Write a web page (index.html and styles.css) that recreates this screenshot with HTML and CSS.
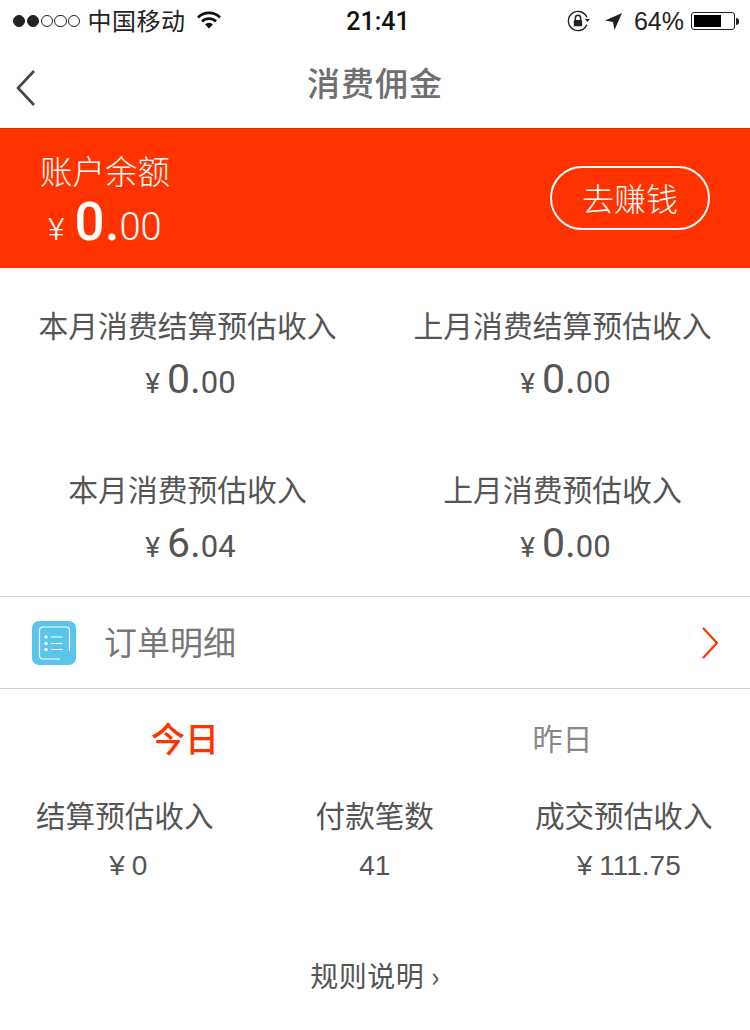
FILE: index.html
```html
<!DOCTYPE html>
<html lang="zh-CN">
<head>
  <meta charset="UTF-8">
  <title>消费佣金</title>
  <link rel="stylesheet" href="styles.css">
</head>
<body>

  <div class="status-bar">
    <div class="status-left">
      <span class="signal"><i class="on"></i><i class="on"></i><i></i><i></i><i></i></span>
      <span class="carrier">中国移动</span>
      <svg class="wifi" width="24" height="18" viewBox="0 0 24 18">
        <path d="M1 6.500a15.500 15.500 0 0 1 22 0" fill="none" stroke="#111" stroke-width="2.600"/>
        <path d="M5 10.500a10 10 0 0 1 14 0" fill="none" stroke="#111" stroke-width="2.600"/>
        <path d="M8 13.200a6 6 0 0 1 8 0L12 17.500z" fill="#111"/>
      </svg>
    </div>
    <div class="status-time">21:41</div>
    <div class="status-right">
      <svg width="25" height="24" viewBox="0 0 24 22">
        <path d="M20 7.500A9.200 9.200 0 1 0 20 14.500" fill="none" stroke="#222" stroke-width="1.300"/>
        <path d="M18 9h5l-2.500 3z" fill="#222"/>
        <path d="M9 10V8a2.500 2.500 0 0 1 5 0v2" fill="none" stroke="#222" stroke-width="1.500"/>
        <rect x="7.500" y="10" width="8" height="6" rx="1" fill="#222"/>
      </svg>
      <svg class="arrow" width="19" height="19" viewBox="0 0 19 19">
        <path d="M18 1L1 8.500l8 1.500 1.500 8z" fill="#222"/>
      </svg>
      <span class="percent">64%</span>
      <span class="battery"><span class="battery-fill"></span></span>
      <span class="battery-tip"></span>
    </div>
  </div>

  <div class="nav-bar">
    <svg class="back" width="22" height="38" viewBox="0 0 22 38">
      <path d="M19 2L3 19l16 17" fill="none" stroke="#444" stroke-width="2.600"/>
    </svg>
    <h1>消费佣金</h1>
  </div>

  <div class="balance">
    <div>
      <div class="balance-label">账户余额</div>
      <div class="balance-value"><span class="yen">¥</span><b>0.</b><span class="cents">00</span></div>
    </div>
    <div class="earn-btn">去赚钱</div>
  </div>

  <div class="income-grid">
    <div class="income">
      <div class="income-label">本月消费结算预估收入</div>
      <div class="money"><span class="yen-sm">¥</span><span class="big">0.</span>00</div>
    </div>
    <div class="income">
      <div class="income-label">上月消费结算预估收入</div>
      <div class="money"><span class="yen-sm">¥</span><span class="big">0.</span>00</div>
    </div>
    <div class="income">
      <div class="income-label">本月消费预估收入</div>
      <div class="money"><span class="yen-sm">¥</span><span class="big">6.</span>04</div>
    </div>
    <div class="income">
      <div class="income-label">上月消费预估收入</div>
      <div class="money"><span class="yen-sm">¥</span><span class="big">0.</span>00</div>
    </div>
  </div>

  <div class="order-row">
    <span class="order-icon">
      <svg width="44" height="44" viewBox="0 0 44 44">
        <path d="M37.500 30V9.500a3.500 3.500 0 0 0-3.500-3.500H11a3.500 3.500 0 0 0-3.500 3.500V34.500a3.500 3.500 0 0 0 3.500 3.500h17" fill="none" stroke="#fff" stroke-width="1.200"/>
        <circle cx="14" cy="16" r="1.700" fill="#fff"/>
        <circle cx="14" cy="22.500" r="1.700" fill="#fff"/>
        <circle cx="14" cy="28.500" r="1.700" fill="#fff"/>
        <path d="M19 16h11.500M19 22.500h11.500M19 28.500h11.500" stroke="#fff" stroke-width="1.200"/>
      </svg>
    </span>
    <span class="order-text">订单明细</span>
    <svg class="order-arrow" width="18" height="32" viewBox="0 0 18 32">
      <path d="M2 1l14 15L2 31" fill="none" stroke="#ff3300" stroke-width="2.200"/>
    </svg>
  </div>

  <div class="tabs">
    <div class="tab active">今日</div>
    <div class="tab">昨日</div>
  </div>

  <div class="stats">
    <div class="stat stat-a">
      <div class="stat-label">结算预估收入</div>
      <div class="stat-value"><span class="yen-sm">¥</span>0</div>
    </div>
    <div class="stat stat-b">
      <div class="stat-label">付款笔数</div>
      <div class="stat-value">41</div>
    </div>
    <div class="stat stat-c">
      <div class="stat-label">成交预估收入</div>
      <div class="stat-value"><span class="yen-sm">¥</span>111.75</div>
    </div>
  </div>

  <div class="rules">规则说明 ›</div>

</body>
</html>
```
FILE: styles.css
```css
body {
  margin: 0;
  width: 750px;
  background: #fff;
  font-family: "Noto Sans CJK SC", "Liberation Sans", sans-serif;
  color: #555;
}
.status-bar {
  height: 42px;
  display: grid;
  grid-template-columns: 1fr auto 1fr;
  align-items: center;
  color: #222;
  font-size: 24px;
}
.status-left {
  display: flex;
  align-items: center;
  padding-left: 13px;
}
.signal {
  display: flex;
  gap: 1.500px;
  margin-right: 7px;
}
.signal i {
  width: 12.300px;
  height: 12.300px;
  box-sizing: border-box;
  border: 1px solid #222;
  border-radius: 50%;
}
.signal i.on {
  background: #222;
}
.carrier {
  line-height: 40px;
  letter-spacing: 0.5px;
  margin-top: -2px;
}
.wifi {
  margin-left: 12px;
  margin-top: -3px;
}
.status-time {
  font-family: Roboto, "Liberation Sans", sans-serif;
  font-weight: 500;
  font-size: 25px;
  color: #111;
  padding-left: 6px;
}
.status-right {
  display: flex;
  align-items: center;
  justify-content: flex-end;
  padding-right: 11px;
  font-family: "Liberation Sans", sans-serif;
  font-size: 25px;
}
.arrow {
  margin-left: 13px;
}
.percent {
  margin-left: 11px;
}
.battery {
  margin-left: 7px;
  width: 44px;
  height: 18px;
  box-sizing: border-box;
  border: 1px solid #222;
  border-radius: 3px;
  padding: 2px;
  display: flex;
}
.battery-fill {
  width: 27px;
  background: #000;
}
.battery-tip {
  width: 3px;
  height: 7px;
  margin-left: 1px;
  background: #222;
  border-radius: 0 3px 3px 0;
}
.nav-bar {
  height: 86px;
  box-sizing: border-box;
  display: flex;
  align-items: center;
  justify-content: center;
  position: relative;
  padding-bottom: 6px;
}
.back {
  position: absolute;
  left: 15px;
  top: 27px;
}
h1 {
  margin: 0;
  font-size: 33px;
  font-weight: 500;
  letter-spacing: 1px;
  color: #707070;
}
.balance {
  height: 140px;
  box-sizing: border-box;
  background: #ff3300;
  border-top: 1px solid #c8300f;
  padding: 0 40px;
  display: flex;
  align-items: center;
  justify-content: space-between;
  color: #fff;
}
.balance-label {
  font-size: 32.500px;
  line-height: 44px;
  font-weight: 300;
  margin-top: 8px;
}
.balance-value {
  font-family: Roboto, "Liberation Sans", sans-serif;
  font-size: 38px;
  line-height: 56px;
  padding-left: 8px;
  margin-top: 2px;
  font-weight: 300;
}
.balance-value b {
  font-size: 53px;
  font-weight: 500;
}
.yen {
  font-size: 32px;
  margin-right: 10px;
}
.earn-btn {
  width: 160px;
  height: 64px;
  box-sizing: border-box;
  border: 2px solid #fff;
  border-radius: 32px;
  font-size: 32px;
  line-height: 58px;
  text-align: center;
  font-weight: 300;
  margin-top: -2px;
}
.income-grid {
  display: grid;
  grid-template-columns: 375px 375px;
  grid-auto-rows: 164px;
  height: 329px;
  box-sizing: border-box;
  padding-top: 35px;
  border-bottom: 1px solid #d0d0d0;
}
.income {
  text-align: center;
  font-size: 29.800px;
  line-height: 42px;
}
.income-label {
  color: #555;
}
.money {
  font-family: Roboto, "Liberation Sans", sans-serif;
  font-size: 31px;
  line-height: 52px;
  margin-top: 8px;
  padding-left: 6px;
  color: #555;
}
.big {
  font-size: 41px;
}
.yen-sm {
  font-size: 28px;
  margin-right: 7px;
}
.order-row {
  height: 92px;
  box-sizing: border-box;
  border-bottom: 1px solid #d0d0d0;
  display: flex;
  align-items: center;
  padding: 0 31px 0 32px;
}
.order-icon {
  width: 44px;
  height: 44px;
  background: #5bc4ec;
  border-radius: 7px;
  display: flex;
}
.order-text {
  margin-left: 28px;
  font-size: 33px;
  line-height: 40px;
  color: #777;
  flex: 1;
  margin-top: -3px;
}
.tabs {
  display: grid;
  grid-template-columns: 375px 375px;
  height: 100px;
  align-items: center;
  text-align: center;
  padding-bottom: 4px;
  box-sizing: border-box;
}
.tab {
  font-size: 30px;
  color: #888;
}
.tab.active {
  font-size: 34px;
  padding-right: 5px;
  color: #ff3300;
  font-weight: 500;
}
.stats {
  display: flex;
  height: 130px;
  padding: 4px 0 0 36px;
  color: #555;
}
.stat {
  font-size: 29.600px;
  text-align: center;
  line-height: 44px;
}
.stat-b {
  margin-left: 102px;
}
.stat-c {
  margin-left: 101px;
}
.stat-value {
  font-family: "Liberation Sans", sans-serif;
  font-size: 28px;
  line-height: 50px;
  margin-top: 4px;
  color: #555;
}
.stat-a .stat-value {
  padding-left: 7px;
}
.stat-c .stat-value {
  padding-left: 10px;
}
.rules {
  margin-top: 32px;
  text-align: center;
  font-size: 28px;
  line-height: 40px;
  letter-spacing: 0.5px;
  color: #555;
}
```
